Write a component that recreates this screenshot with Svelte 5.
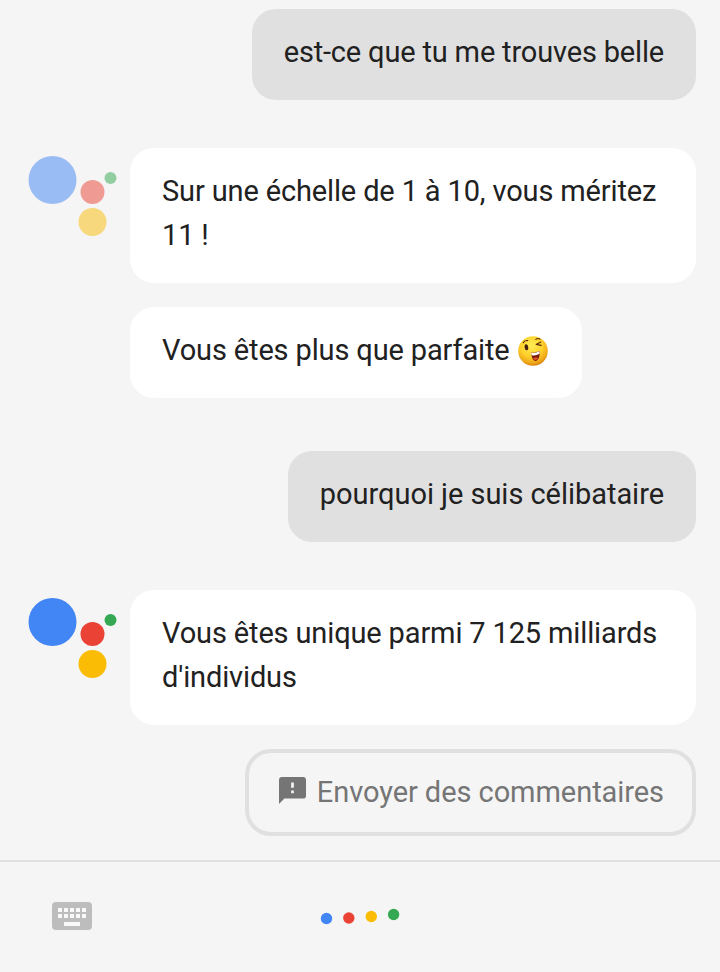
<script>
  const colors = { blue: '#4285f4', red: '#ea4335', yellow: '#fbbc05', green: '#34a853' };
  const dots = [
    { cx: 6.5, cy: 10.5, c: colors.blue },
    { cx: 28.8, cy: 10, c: colors.red },
    { cx: 51.3, cy: 8.5, c: colors.yellow },
    { cx: 73.6, cy: 6.5, c: colors.green },
  ];
</script>

{#snippet logo(faded)}
  <svg class="logo" class:faded width="90" height="82" viewBox="0 0 90 82">
    <circle cx="24.5" cy="24" r="24" fill={colors.blue} />
    <circle cx="64.5" cy="36" r="12" fill={colors.red} />
    <circle cx="64.5" cy="66" r="14" fill={colors.yellow} />
    <circle cx="82.5" cy="22" r="6" fill={colors.green} />
  </svg>
{/snippet}

{#snippet wink()}
  <svg class="wink" width="30" height="30" viewBox="0 0 30 30" role="img" aria-label="clin d'œil">
    <defs>
      <radialGradient id="face" cx="45%" cy="32%" r="68%">
        <stop offset="0" stop-color="#ffee55" />
        <stop offset=".55" stop-color="#fdd02c" />
        <stop offset=".85" stop-color="#f0a818" />
        <stop offset="1" stop-color="#d98211" />
      </radialGradient>
    </defs>
    <circle cx="15" cy="15" r="14.8" fill="url(#face)" />
    <ellipse cx="8.4" cy="11.2" rx="1.8" ry="3" fill="#42200b" transform="rotate(-8 9 11)" />
    <g fill="none" stroke="#5b2d08" stroke-width="1.1" stroke-linecap="round" stroke-linejoin="round">
      <path d="M5.3 6.8Q6.3 4.2 9.7 4.6" />
      <path d="M17.8 3.4Q19.8 1.8 22 3.2" />
      <path d="M22.8 6L18.2 8.4L23.2 9.4" />
    </g>
    <path d="M13 16.4Q17 17.6 21.6 14.8Q22.2 23.6 17.8 25Q13.8 24.8 13 16.4Z" fill="#7c1d0c" />
    <path d="M13.1 16.7Q17.4 17.8 21.5 15.1L21.5 17.8Q17.6 20.2 13.5 19.2Z" fill="#fff" />
    <path d="M14.9 22.4Q17.5 20.6 20.4 22Q18 26 14.9 22.4Z" fill="#e4522c" />
  </svg>
{/snippet}

<div class="screen">
  <main>
    <div class="row user">
      <div class="bubble grey question">est-ce que tu me trouves belle</div>
    </div>
    <div class="row reply">
      {@render logo(true)}
      <div class="stack">
        <div class="bubble wide">Sur une échelle de 1 à 10, vous méritez<br />11 !</div>
        <div class="bubble">Vous êtes plus que parfaite {@render wink()}</div>
      </div>
    </div>
    <div class="row user second">
      <div class="bubble grey">pourquoi je suis célibataire</div>
    </div>
    <div class="row reply">
      {@render logo(false)}
      <div class="stack">
        <div class="bubble wide">Vous êtes unique parmi 7 125 milliards<br />d'individus</div>
      </div>
    </div>
    <div class="row user feedback">
      <button>
        <svg width="27" height="27" viewBox="2 2 20 20">
          <path fill="#757575" d="M20 2H4c-1.1 0-1.99.9-1.99 2L2 22l4-4h14c1.1 0 2-.9 2-2V4c0-1.1-.9-2-2-2zm-7 12h-2v-2h2v2zm0-4h-2V6h2v4z" />
        </svg>
        <span>Envoyer des commentaires</span>
      </button>
    </div>
  </main>
  <footer>
    <svg class="keyboard" width="40" height="28" viewBox="0 0 40 28">
      <rect width="40" height="28" rx="4" fill="#bdbdbd" />
      {#each [6, 12, 18, 24, 30] as x}
        <rect {x} y="6" width="4" height="4" fill="#f9f9f9" />
        <rect {x} y="12" width="4" height="4" fill="#f9f9f9" />
      {/each}
      <rect x="12" y="20" width="16" height="4" fill="#f9f9f9" />
    </svg>
    <svg class="dots" width="80" height="18" viewBox="0 0 80 18">
      {#each dots as d}
        <circle cx={d.cx} cy={d.cy} r="5.7" fill={d.c} />
      {/each}
    </svg>
  </footer>
</div>

<style>
  :global(body) {
    margin: 0;
    background: #f5f5f5;
  }
  .screen {
    width: 720px;
    height: 972px;
    display: flex;
    flex-direction: column;
    overflow: hidden;
    background: #f5f5f5;
    color: #212121;
    font: 400 29px/44px Roboto, sans-serif;
  }
  main {
    flex: none;
    box-sizing: border-box;
    height: 860px;
    padding: 9px 24px 0 28px;
  }
  .row {
    display: flex;
  }
  .user {
    justify-content: flex-end;
  }
  .second {
    margin-top: 53px;
  }
  .reply {
    margin-top: 48px;
    gap: 12px;
  }
  .logo {
    flex: none;
    margin-top: 8px;
  }
  .faded {
    opacity: 0.5;
  }
  .stack {
    flex: 1;
    display: flex;
    flex-direction: column;
    align-items: flex-start;
    gap: 24px;
  }
  .bubble {
    box-sizing: border-box;
    padding: 21px 32px 26px;
    border-radius: 24px;
    background: #fff;
    white-space: nowrap;
    letter-spacing: -0.14px;
  }
  .wide {
    width: 100%;
  }
  .grey {
    background: #e0e0e0;
    letter-spacing: -0.04px;
  }
  .question {
    letter-spacing: -0.17px;
  }
  .wink {
    vertical-align: -6px;
    margin: 0 2px 0 1px;
  }
  .feedback {
    margin-top: 24px;
  }
  button {
    display: flex;
    align-items: flex-start;
    gap: 10.5px;
    height: 87px;
    box-sizing: border-box;
    padding: 17px 28px 0 30.5px;
    border: 4px solid #e0e0e0;
    border-radius: 26px;
    background: transparent;
    color: #757575;
    font: inherit;
    letter-spacing: -0.06px;
    white-space: nowrap;
  }
  button svg {
    margin-top: 6.5px;
  }
  footer {
    flex: 1;
    display: flex;
    align-items: flex-start;
    border-top: 2px solid #e0e0e0;
    padding: 40px 52px 0;
  }
  .dots {
    margin: 6px 0 0 228px;
  }
</style>
